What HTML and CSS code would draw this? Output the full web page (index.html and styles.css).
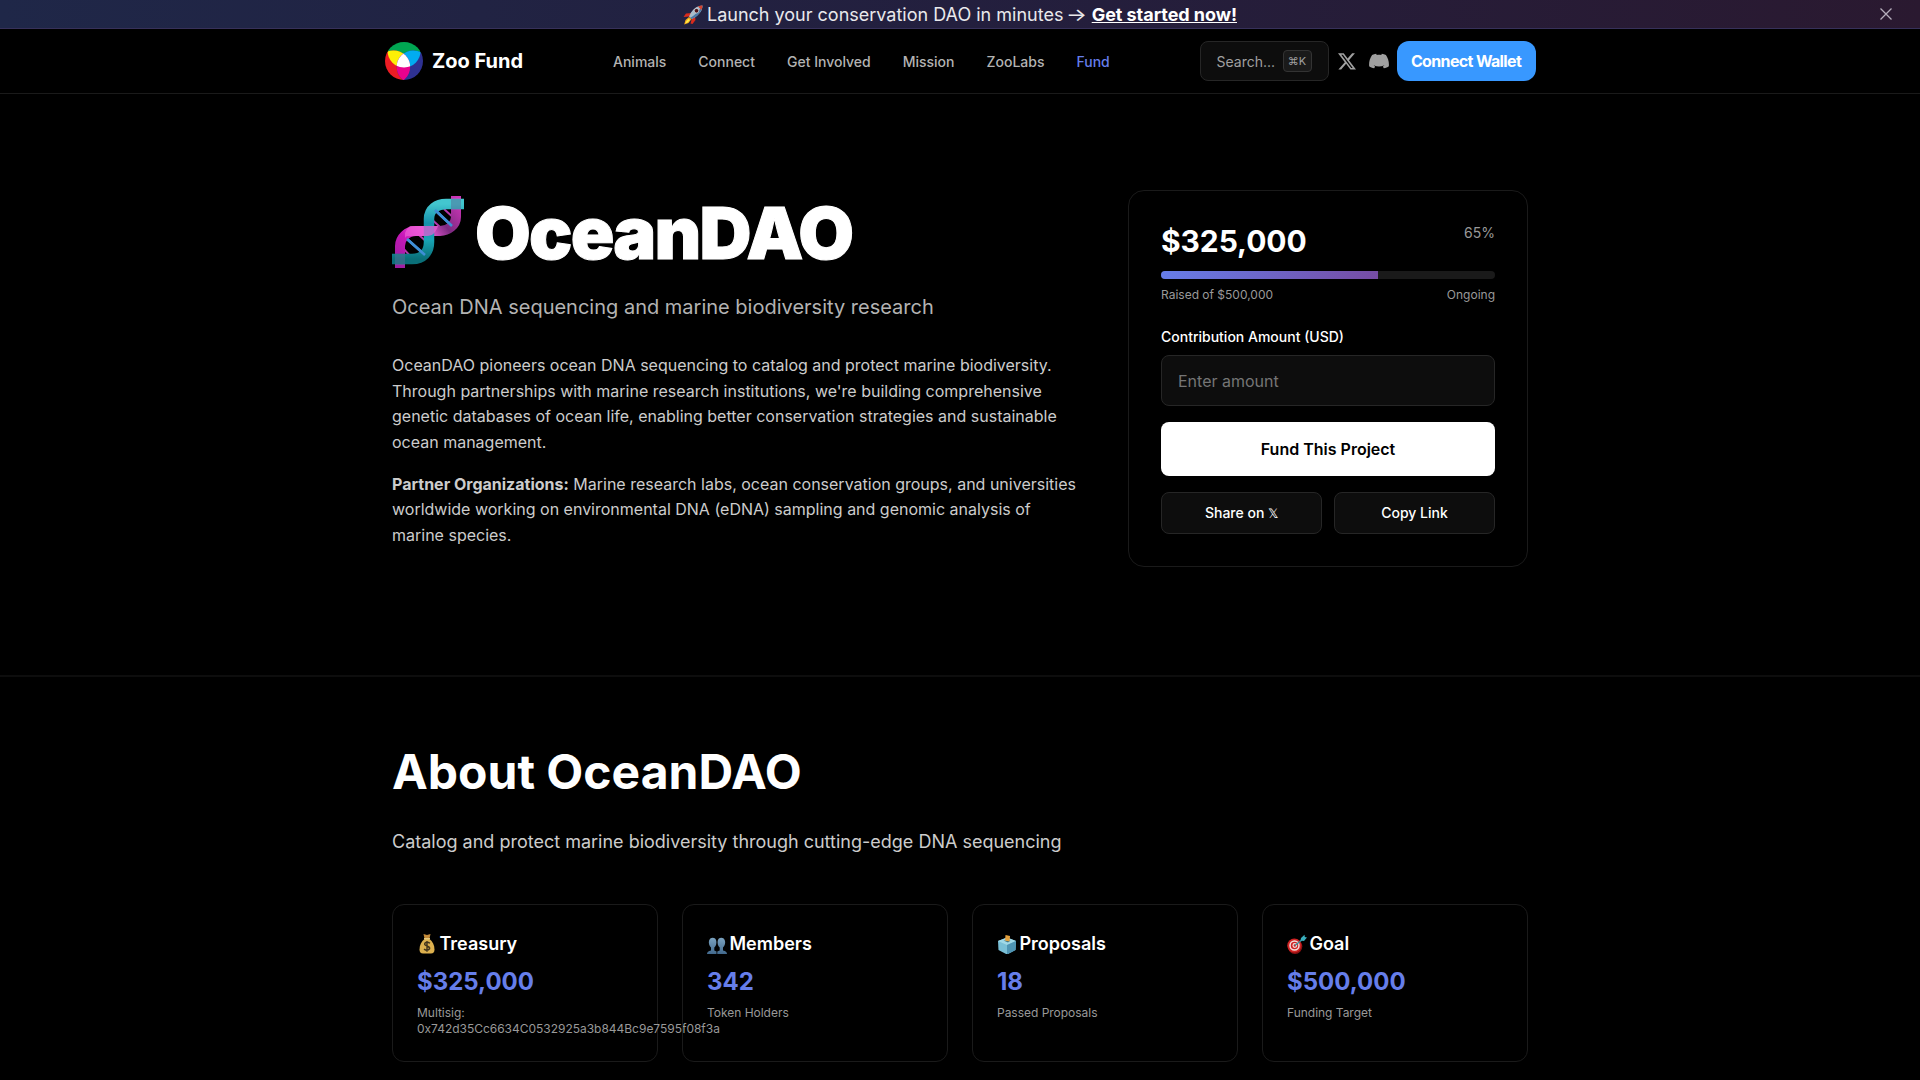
FILE: index.html
```html
<!DOCTYPE html>
<html lang="en">
<head>
<meta charset="utf-8">
<title>OceanDAO | Zoo Fund</title>
<link rel="stylesheet" href="styles.css">
</head>
<body>
<div class="banner">
  <svg class="banner-rocket" viewBox="0 0 20 20">
    <path d="M9 8 3 8.5 0.5 12 6.5 11.5z" fill="#d92b1c"/>
    <path d="M12 11 12.500 15 9.500 19 7.500 18.500 9 13z" fill="#d92b1c"/>
    <path d="M6 12 8.500 14 5.500 18 1.200 19.500 2.500 15z" fill="#f6a91c"/>
    <path d="M5.500 14 7 15 4.500 17.500 2.300 18.500 3.500 16z" fill="#fff04a"/>
    <path d="M19.500.5C15 .6 11 3 8 7.500L6 11.500 8.700 14 12.500 12C17 8.500 19.500 5 19.500.5z" fill="#a9bdcb"/>
    <path d="M19.500.5C19 5 17 8.500 12.500 12L8.700 14 7.500 12.800C12 10 16 6 19.500.5z" fill="#4979a8"/>
    <path d="M19.500.5C18 .5 16.300 .9 15 1.500L18.300 5C19 3.600 19.500 2 19.500.5z" fill="#d5432f"/>
    <circle cx="13.500" cy="5.700" r="2.300" fill="#51151b" stroke="#d9e2e8" stroke-width=".7"/>
  </svg>
  <span class="banner-text">Launch your conservation DAO in minutes <span class="arrow">→</span> <a class="banner-link">Get started now!</a></span>
  <svg class="banner-close" viewBox="0 0 12 12"><path d="M.5.5l11 11M11.500.5l-11 11" stroke="#b5aebc" stroke-width="1.300" fill="none"/></svg>
</div>

<header class="navbar">
  <div class="navbar-inner">
    <a class="brand">
      <svg class="brand-logo" viewBox="242 241 540 540">
        <defs>
          <clipPath id="outer"><circle cx="512" cy="511" r="270"/></clipPath>
          <clipPath id="green"><circle cx="513" cy="369" r="234"/></clipPath>
          <clipPath id="red"><circle cx="365" cy="595" r="234"/></clipPath>
          <clipPath id="blue"><circle cx="643" cy="595" r="234"/></clipPath>
        </defs>
        <g clip-path="url(#outer)">
          <circle cx="513" cy="369" r="234" fill="#00a652"/>
          <circle cx="365" cy="595" r="234" fill="#ed1c24"/>
          <circle cx="643" cy="595" r="234" fill="#2e3192"/>
          <g clip-path="url(#green)"><circle cx="365" cy="595" r="234" fill="#fcf006"/><circle cx="643" cy="595" r="234" fill="#01acf1"/></g>
          <g clip-path="url(#red)"><circle cx="643" cy="595" r="234" fill="#ea018e"/>
            <g clip-path="url(#blue)"><circle cx="513" cy="369" r="234" fill="#fff"/></g></g>
        </g>
      </svg>
      Zoo Fund
    </a>
    <nav class="links">
      <a>Animals</a><a>Connect</a><a>Get Involved</a><a>Mission</a><a>ZooLabs</a><a class="active">Fund</a>
    </nav>
    <div class="actions">
      <div class="search">Search... <kbd class="kbd">⌘K</kbd></div>
      <svg class="icon-x" viewBox="0 0 24 22"><path fill="#a0a0a0" d="M18.900 0h3.700l-8 9.200L24 21.700h-7.400l-5.800-7.600-6.600 7.600H.5l8.600-9.800L0 0h7.600l5.200 6.900zm-1.300 19.500h2L6.500 2.100H4.300z"/></svg>
      <svg class="icon-discord" viewBox="0 3.600 24 17.400"><path fill="#a0a0a0" d="M20.300 5C18.800 4.300 17.100 3.800 15.400 3.600L14.700 5C12.900 4.700 11.100 4.700 9.300 5L8.600 3.600C6.900 3.800 5.200 4.300 3.700 5C.6 9.600-.2 14.100.2 18.500C1.500 19.700 4 20.600 6.200 21L7.500 18.900L5.600 18L6.100 17.600C10 19.400 14.100 19.400 18 17.600L18.400 18L16.500 18.900L17.800 21C20 20.600 22.500 19.700 23.800 18.500C24.300 13.400 23 9 20.300 5z"/></svg>
      <button class="wallet">Connect Wallet</button>
    </div>
  </div>
</header>

<section class="hero">
  <div class="container hero-grid">
    <div class="intro">
      <h1 class="title">
        <svg class="dna" viewBox="0 0 72 72">
          <defs>
            <linearGradient id="teal" x1="0" y1="0" x2="0" y2="1"><stop offset="0" stop-color="#43c6cf"/><stop offset=".35" stop-color="#1490aa"/><stop offset=".65" stop-color="#18a5b5"/><stop offset="1" stop-color="#0a6f78"/></linearGradient>
            <linearGradient id="pink" x1="0" y1="1" x2="1" y2="0"><stop offset="0" stop-color="#9c1fa0"/><stop offset=".25" stop-color="#c717b8"/><stop offset=".48" stop-color="#ee5bd8"/><stop offset=".7" stop-color="#7c2a80"/><stop offset="1" stop-color="#cf35b9"/></linearGradient>
          </defs>
          <path d="M43 14 60 30M15 43 33 59" stroke="#3b86c8" stroke-width="2.600"/>
          <path d="M36 20 48 31M52 13 64 24M9 50 21 63M26 38 38 49" stroke="#b536ac" stroke-width="2"/>
          <path d="M8 72V50C8 42 15 35 24 35H48C56 35 64 29 64 21V0" fill="none" stroke="url(#pink)" stroke-width="10"/>
          <path d="M0 63H20C31 63 37 56 37 46V23C37 13 45 8 54 8H72" fill="none" stroke="url(#teal)" stroke-width="10.500"/>
          <path d="M18 30H46C44 36 41 40 35 40H16Q13 40 13 43V37Q15 32 18 30z" fill="#ec5ad6" opacity=".72"/>
          <path d="M59 3H69V13H59zM3 58H13V69H3z" fill="#536d98" opacity=".5"/>
          <path d="M43 14 60 30M15 43 33 59" stroke="#3f8fd6" stroke-width="2.600"/>
        </svg>
        <span class="title-text">OceanDAO</span>
      </h1>
      <p class="subtitle">Ocean DNA sequencing and marine biodiversity research</p>
      <div class="body-text">
        <p>OceanDAO pioneers ocean DNA sequencing to catalog and protect marine biodiversity. Through partnerships with marine research institutions, we're building comprehensive genetic databases of ocean life, enabling better conservation strategies and sustainable ocean management.</p>
        <p><strong>Partner Organizations:</strong> Marine research labs, ocean conservation groups, and universities worldwide working on environmental DNA (eDNA) sampling and genomic analysis of marine species.</p>
      </div>
    </div>
    <aside class="fund-card">
      <div class="amount-row"><span class="amount">$325,000</span><span class="percent">65%</span></div>
      <div class="progress"><div class="progress-fill" style="width:65%"></div></div>
      <div class="meta-row"><span>Raised of $500,000</span><span>Ongoing</span></div>
      <label class="field-label" for="amount">Contribution Amount (USD)</label>
      <input class="field" id="amount" placeholder="Enter amount">
      <button class="fund-button">Fund This Project</button>
      <div class="share-row"><button class="share">Share on <span class="share-x">𝕏</span></button><button class="share">Copy Link</button></div>
    </aside>
  </div>
</section>

<section class="about">
  <div class="container">
    <h2 class="about-title">About OceanDAO</h2>
    <p class="about-text">Catalog and protect marine biodiversity through cutting-edge DNA sequencing</p>
    <div class="stats">
      <div class="stat">
        <h3 class="stat-title"><svg class="emoji" viewBox="0 0 20 20">
          <path d="M6.500 0 10 1 13.500 0 12.500 4.500H7.500z" fill="#c48a38"/>
          <path d="M7.500 5h5C15.500 7.500 17.500 11 17.500 15.500Q17.500 19.500 14 19.500H6Q2.500 19.500 2.500 15.500C2.500 11 4.500 7.500 7.500 5z" fill="#dcb04e"/>
          <path d="M7 4.700h6" stroke="#f3d98d" stroke-width="1.200"/>
          <path d="M13 9.300Q10 7 7.800 9.300C6.500 12.500 13.500 11.500 12.600 14.800Q10.500 17.500 7 15.200M10 7v10.700" fill="none" stroke="#43351c" stroke-width="1.400"/>
        </svg>Treasury</h3>
        <div class="stat-value">$325,000</div>
        <div class="stat-label">Multisig: 0x742d35Cc6634C0532925a3b844Bc9e7595f08f3a</div>
      </div>
      <div class="stat">
        <h3 class="stat-title"><svg class="emoji" viewBox="0 0 20 20">
          <defs><linearGradient id="people" x1="0" y1="0" x2="0" y2="1"><stop offset="0" stop-color="#7ba3c0"/><stop offset="1" stop-color="#42698d"/></linearGradient></defs>
          <path d="M0 20Q0 17 4 16.500V13.500C2 11.500 1.500 9 2 7C2.500 2.500 9 2.500 9.300 7C9.700 9.500 9 12 7.300 13.500V16.500L9.500 17.500V20z" fill="url(#people)"/>
          <path d="M20 20Q20 17 16 16.500V13.500C18 11.500 18.500 9 18 7C17.500 2.500 11 2.500 10.700 7C10.300 9.500 11 12 12.700 13.500V16.500L10.300 17.500V20z" fill="url(#people)"/>
        </svg>Members</h3>
        <div class="stat-value">342</div>
        <div class="stat-label">Token Holders</div>
      </div>
      <div class="stat">
        <h3 class="stat-title"><svg class="emoji" viewBox="0 0 20 20">
          <path d="M10 3.500 19 7 18.500 16 10 20.500 1.500 16 1 7z" fill="#79bfd6"/>
          <path d="M10 3.500 19 7 10 11 1 7z" fill="#a0d8e6"/>
          <path d="M10 11 19 7 18.500 16 10 20.500z" fill="#4e94b3"/>
          <path d="M6.500 6.500 13.500 6.500 11 8.500z" fill="#3c7487"/>
          <path d="M8.500 1 13 2 12.500 7.500 8 6.500z" fill="#e3a03d"/>
        </svg>Proposals</h3>
        <div class="stat-value">18</div>
        <div class="stat-label">Passed Proposals</div>
      </div>
      <div class="stat">
        <h3 class="stat-title"><svg class="emoji" viewBox="0 0 20 20">
          <ellipse cx="8" cy="12.500" rx="7.300" ry="7.500" fill="#8f1113"/>
          <circle cx="7.300" cy="11.500" r="7" fill="#cf2323"/>
          <circle cx="7.500" cy="11.500" r="4.500" fill="none" stroke="#f4dfdc" stroke-width="1.500"/>
          <circle cx="7.800" cy="11.500" r="1.800" fill="none" stroke="#f4dfdc" stroke-width="1.200"/>
          <path d="M8 11.500 16 5" stroke="#3a8e9c" stroke-width="1.400"/>
          <path d="M13.500 6.500 14 4 17.500.8 17.800 3 20 3.500 17 7z" fill="#39aebc"/>
        </svg>Goal</h3>
        <div class="stat-value">$500,000</div>
        <div class="stat-label">Funding Target</div>
      </div>
    </div>
  </div>
</section>
</body>
</html>
```
FILE: styles.css
```css
* { box-sizing: border-box; margin: 0; padding: 0; }
html, body { height: 1080px; overflow: hidden; }
body { background: #000; color: #fff; font-family: Inter, "Liberation Sans", sans-serif; }
button, input, kbd { font-family: inherit; }

.banner { height: 29px; position: relative; display: flex; justify-content: center; align-items: center; gap: 4px; border-bottom: 1px solid #37315a; background: linear-gradient(90deg, #1f2748 0%, #231f3e 50%, #2a1930 100%); }
.banner-rocket { width: 20px; height: 20px; margin-top: 2px; }
.banner-text { padding-top: 2px; font-size: 18px; line-height: 28px; color: #e9e9ec; white-space: nowrap; }
.arrow { display: inline-block; margin: 0 1px 0 0; transform: scaleX(1.22); }
.banner-link { font-weight: 700; letter-spacing: -.05px; color: #fff; text-decoration: underline; }
.banner-close { position: absolute; right: 28px; top: 8px; width: 12px; height: 12px; }

.navbar { height: 65px; border-bottom: 1px solid #1a1a1a; }
.navbar-inner { width: 1151px; height: 64px; margin: 0 auto; display: grid; grid-template-columns: 228.500px 1fr auto; align-items: center; }
.brand { display: flex; align-items: center; gap: 9.500px; font-size: 20px; font-weight: 700; }
.brand-logo { width: 38px; height: 38px; }
.links { display: flex; gap: 32px; font-size: 14px; font-weight: 500; color: #b3b3b3; padding-top: 1px; }
.links .active { color: #667eea; }
.actions { display: flex; align-items: center; }
.search { width: 129px; height: 40px; padding: 0 16px; display: flex; align-items: center; justify-content: space-between; border: 1px solid #262626; border-radius: 8px; background: #0d0d0d; color: #a0a0a0; font-size: 14px; }
.kbd { width: 29px; height: 22px; border: 1px solid #333; border-radius: 4px; background: #1a1a1a; font-size: 11px; line-height: 20px; text-align: center; }
.icon-x { width: 18px; height: 17px; margin-left: 9px; }
.icon-discord { width: 20px; height: 16px; margin: 0 8px 0 13px; }
.wallet { width: 139px; height: 40px; border: 0; border-radius: 12px; background: #3898ff; color: #fff; font-size: 16px; font-weight: 700; letter-spacing: -.640px; white-space: nowrap; }

.container { width: 1136px; margin: 0 auto; }
.hero { height: 583px; padding-top: 96px; border-bottom: 2px solid #0d0d0d; }
.hero-grid { display: grid; grid-template-columns: 688px 400px; gap: 48px; align-items: start; }
.title { margin-top: 2px; height: 80px; display: flex; align-items: center; gap: 11px; font-size: 72px; line-height: 80px; font-weight: 900; letter-spacing: -1.770px; }
.title-text { padding-top: 1px; -webkit-text-stroke: 1px #fff; }
.dna { width: 72px; height: 72px; flex: none; }
.subtitle { margin-top: 19px; font-size: 20px; line-height: 32px; color: #b3b3b3; }
.body-text { margin-top: 30px; display: grid; gap: 16.400px; font-size: 16px; line-height: 25.600px; color: #ccc; }

.fund-card { height: 377px; padding: 32px; border: 1px solid #1a1a1a; border-radius: 16px; }
.amount-row, .meta-row { display: flex; justify-content: space-between; }
.amount { font-size: 30px; line-height: 37px; height: 35px; font-weight: 700; letter-spacing: -.080px; }
.percent { font-size: 14px; line-height: 20px; color: #999; }
.progress { height: 8px; margin-top: 13px; border-radius: 4px; background: #1a1a1a; overflow: hidden; }
.progress-fill { height: 100%; background: linear-gradient(135deg, #667eea, #764ba2); }
.meta-row { margin-top: 6px; font-size: 12px; line-height: 19px; color: #999; }
.field-label { display: block; margin-top: 22px; font-size: 14px; line-height: 22px; font-weight: 500; }
.field { display: block; width: 100%; height: 51px; margin-top: 7px; padding: 0 16px; border: 1px solid #262626; border-radius: 8px; background: #0d0d0d; font-size: 16px; }
.field::placeholder { color: #757575; }
.fund-button { display: block; width: 100%; height: 54px; margin-top: 16px; border: 0; border-radius: 8px; background: #fff; color: #000; font-size: 16px; font-weight: 600; }
.share-row { display: grid; grid-template-columns: 1fr 1fr; gap: 12px; margin-top: 16px; }
.share { height: 42px; padding-bottom: 1px; border: 1px solid #262626; border-radius: 8px; background: #0d0d0d; color: #fff; font-size: 14px; font-weight: 500; line-height: 20px; }
.share-x { font-size: 12.500px; font-weight: 500; line-height: 1; }

.about { padding-top: 66px; }
.about-title { font-size: 48px; line-height: 58px; font-weight: 700; }
.about-text { margin-top: 26px; font-size: 18px; line-height: 30px; color: #ccc; }
.stats { display: grid; grid-template-columns: repeat(4, 266px); gap: 24px; margin-top: 47px; }
.stat { height: 158px; padding: 24px; border: 1px solid #1a1a1a; border-radius: 12px; }
.stat-title { display: flex; align-items: center; gap: 2.500px; font-size: 18px; line-height: 29px; font-weight: 600; }
.emoji { width: 20px; height: 20px; }
.stat-value { margin-top: 5px; font-size: 24px; line-height: 38.400px; font-weight: 700; color: #667eea; }
.stat-label { margin-top: 4px; font-size: 12px; line-height: 16px; letter-spacing: -.020px; color: #999; }
```
